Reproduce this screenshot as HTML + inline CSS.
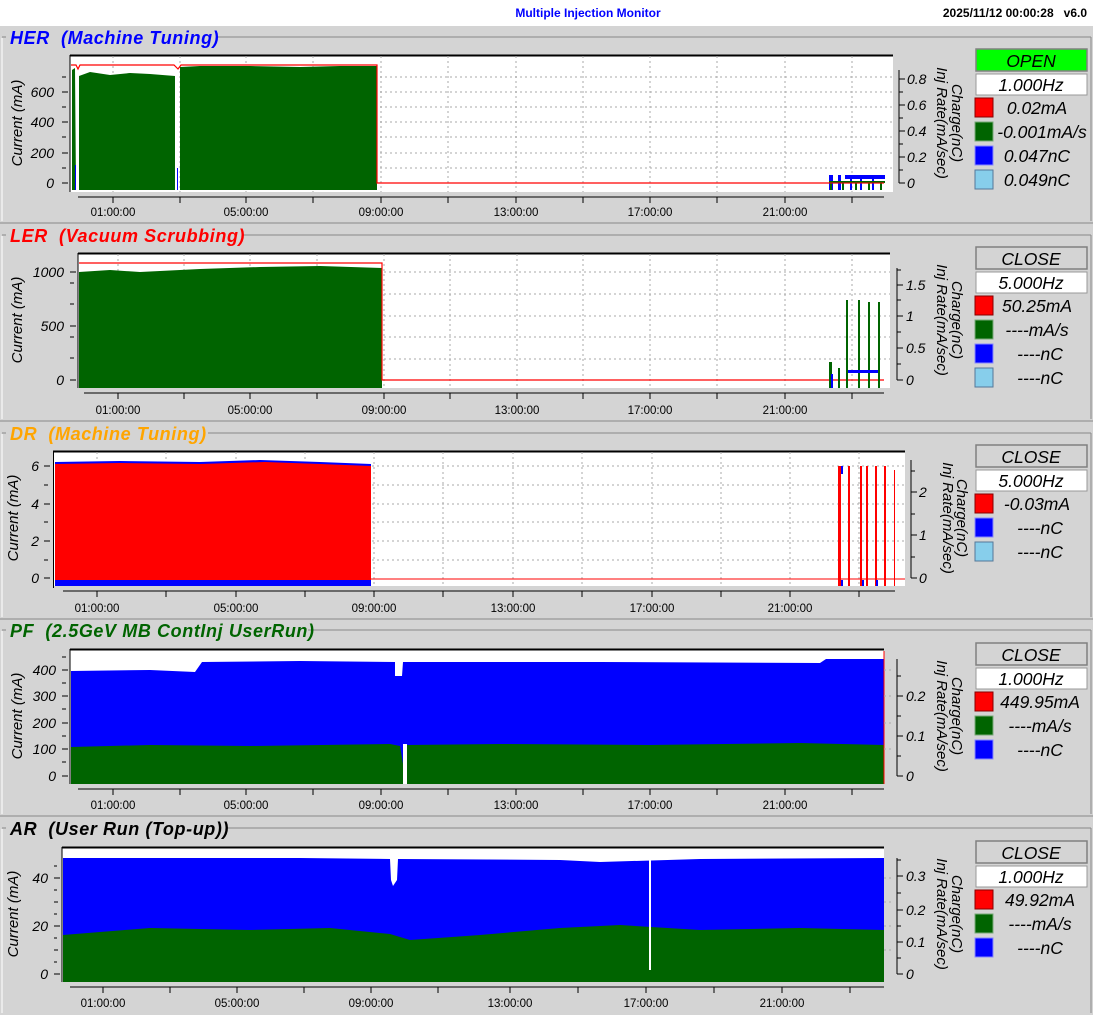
<!DOCTYPE html>
<html><head><meta charset="utf-8"><style>
body{margin:0;background:#d4d4d4;width:1093px;height:1015px;overflow:hidden}
svg{display:block}
.t{font-family:"Liberation Sans",sans-serif;font-style:italic;font-size:14px}
.r{font-size:15px}
.tt{font-family:"Liberation Sans",sans-serif;font-size:11.5px}
.ti{font-family:"Liberation Sans",sans-serif;font-style:italic;font-weight:bold;font-size:18px;letter-spacing:0.6px}
.lg{font-family:"Liberation Sans",sans-serif;font-style:italic;font-size:17.5px}
.g{stroke:#aaa;stroke-dasharray:2 3;stroke-width:1}
</style></head><body>
<svg width="1093" height="1015" xmlns="http://www.w3.org/2000/svg">
<rect x="0" y="0" width="1093" height="26" fill="#fff"/>
<text x="588" y="17" text-anchor="middle" fill="#0000ff" font-family="Liberation Sans Narrow,Liberation Sans,sans-serif" font-weight="bold" font-size="12" font-stretch="condensed">Multiple Injection Monitor</text>
<text x="1087" y="17" text-anchor="end" fill="#000" font-family="Liberation Sans Narrow,Liberation Sans,sans-serif" font-weight="bold" font-size="12" font-stretch="condensed">2025/11/12 00:00:28&#160;&#160;&#160;v6.0</text>

<g stroke="#888" fill="none">
<line x1="0" y1="223" x2="1093" y2="223"/><line x1="0" y1="421" x2="1093" y2="421"/><line x1="0" y1="619" x2="1093" y2="619"/><line x1="0" y1="816" x2="1093" y2="816"/>
<line x1="2" y1="37" x2="1091" y2="37"/><line x1="2" y1="235" x2="1091" y2="235"/><line x1="2" y1="433" x2="1091" y2="433"/><line x1="2" y1="630" x2="1091" y2="630"/><line x1="2" y1="828" x2="1091" y2="828"/>
<line x1="1091" y1="37" x2="1091" y2="221"/><line x1="1091" y1="235" x2="1091" y2="419"/><line x1="1091" y1="433" x2="1091" y2="617"/><line x1="1091" y1="630" x2="1091" y2="814"/><line x1="1091" y1="828" x2="1091" y2="1013"/>
</g>
<g stroke="#fff"><line x1="2" y1="38" x2="2" y2="221"/><line x1="2" y1="236" x2="2" y2="419"/><line x1="2" y1="434" x2="2" y2="617"/><line x1="2" y1="631" x2="2" y2="814"/><line x1="2" y1="829" x2="2" y2="1013"/></g>
<rect x="6" y="28" width="212" height="18" fill="#d4d4d4"/>
<rect x="6" y="226" width="236" height="18" fill="#d4d4d4"/>
<rect x="6" y="424" width="202" height="18" fill="#d4d4d4"/>
<rect x="6" y="621" width="302" height="18" fill="#d4d4d4"/>
<rect x="6" y="819" width="222" height="18" fill="#d4d4d4"/>
<text class="ti" x="10" y="44" fill="#0000ff">HER&#160; (Machine Tuning)</text>
<text class="ti" x="10" y="242" fill="#ff0000">LER&#160; (Vacuum Scrubbing)</text>
<text class="ti" x="10" y="440" fill="#ffa500">DR&#160; (Machine Tuning)</text>
<text class="ti" x="10" y="637" fill="#006400">PF&#160; (2.5GeV MB ContInj UserRun)</text>
<text class="ti" x="10" y="835" fill="#000">AR&#160; (User Run (Top-up))</text>

<!-- HER -->
<rect x="70" y="55" width="823" height="137" fill="#fff"/>
<line x1="70" y1="55.5" x2="893" y2="55.5" stroke="#000" stroke-width="2"/>
<line x1="70" y1="55" x2="70" y2="192" stroke="#000"/>
<g class="g"><line x1="113" y1="56" x2="113" y2="192"/><line x1="180" y1="56" x2="180" y2="192"/><line x1="246" y1="56" x2="246" y2="192"/><line x1="313" y1="56" x2="313" y2="192"/><line x1="381" y1="56" x2="381" y2="192"/><line x1="448" y1="56" x2="448" y2="192"/><line x1="516" y1="56" x2="516" y2="192"/><line x1="583" y1="56" x2="583" y2="192"/><line x1="650" y1="56" x2="650" y2="192"/><line x1="717" y1="56" x2="717" y2="192"/><line x1="785" y1="56" x2="785" y2="192"/><line x1="852" y1="56" x2="852" y2="192"/>
<line x1="380" y1="77" x2="893" y2="77"/><line x1="380" y1="92" x2="893" y2="92"/><line x1="380" y1="107" x2="893" y2="107"/><line x1="380" y1="122" x2="893" y2="122"/><line x1="380" y1="137" x2="893" y2="137"/><line x1="380" y1="153" x2="893" y2="153"/><line x1="380" y1="168" x2="893" y2="168"/></g>
<path d="M72 70 L75 68 L76 190 L72 190Z M79 76 L90 72 L110 75 L130 73 L150 74 L175 76 L175 190 L79 190Z M180 67 L200 66 L250 66 L300 67 L340 66 L377 66 L377 190 L180 190Z" fill="#006400"/>
<path d="M71 65 L76 65 L78 69 L80 65 L174 65 L178 69 L181 65 L377 65 L377 183 L884 183" fill="none" stroke="#f00" stroke-width="1.2"/>
<path d="M829 175h4v15h-4z M838 175h3v15h-3z M845 175h40v4h-40z M850 179h2v11h-2z M860 179h2v11h-2z M872 179h2v11h-2z" fill="#0000ff"/>
<path d="M829 181h56v2h-56z M830 183h2v7h-2z M842 183h2v7h-2z M855 183h2v7h-2z M868 183h2v7h-2z M880 183h2v7h-2z" fill="#006400"/>
<line x1="829" y1="183" x2="884" y2="183" stroke="#f00"/>
<rect x="75" y="165" width="1" height="25" fill="#0000ff"/><rect x="177" y="168" width="1" height="22" fill="#0000ff"/>
<g stroke="#000"><line x1="62" y1="183" x2="68" y2="183"/><line x1="62" y1="122" x2="68" y2="122"/><line x1="62" y1="107" x2="66" y2="107"/><line x1="62" y1="92" x2="68" y2="92"/><line x1="62" y1="77" x2="66" y2="77"/><line x1="62" y1="168" x2="66" y2="168"/><line x1="62" y1="137" x2="66" y2="137"/><line x1="62" y1="153" x2="68" y2="153"/>
<line x1="78" y1="197" x2="884" y2="197"/>
<line x1="113" y1="197" x2="113" y2="203"/><line x1="180" y1="197" x2="180" y2="203"/><line x1="246" y1="197" x2="246" y2="203"/><line x1="313" y1="197" x2="313" y2="203"/><line x1="381" y1="197" x2="381" y2="203"/><line x1="448" y1="197" x2="448" y2="203"/><line x1="516" y1="197" x2="516" y2="203"/><line x1="583" y1="197" x2="583" y2="203"/><line x1="650" y1="197" x2="650" y2="203"/><line x1="717" y1="197" x2="717" y2="203"/><line x1="785" y1="197" x2="785" y2="203"/><line x1="852" y1="197" x2="852" y2="203"/>
<line x1="899" y1="70" x2="899" y2="183"/><line x1="899" y1="183" x2="905" y2="183"/><line x1="899" y1="170" x2="903" y2="170"/><line x1="899" y1="157" x2="905" y2="157"/><line x1="899" y1="144" x2="903" y2="144"/><line x1="899" y1="131" x2="905" y2="131"/><line x1="899" y1="118" x2="903" y2="118"/><line x1="899" y1="105" x2="905" y2="105"/><line x1="899" y1="92" x2="903" y2="92"/><line x1="899" y1="79" x2="905" y2="79"/></g>
<g class="t" text-anchor="end"><text x="54" y="188">0</text><text x="54" y="158">200</text><text x="54" y="127">400</text><text x="54" y="97">600</text></g>
<g class="t"><text x="907" y="188">0</text><text x="907" y="162">0.2</text><text x="907" y="136">0.4</text><text x="907" y="110">0.6</text><text x="907" y="84">0.8</text></g>
<g class="tt" text-anchor="middle"><text x="113" y="216">01:00:00</text><text x="246" y="216">05:00:00</text><text x="381" y="216">09:00:00</text><text x="516" y="216">13:00:00</text><text x="650" y="216">17:00:00</text><text x="785" y="216">21:00:00</text></g>
<text class="t r" transform="translate(22,123) rotate(-90)" text-anchor="middle">Current (mA)</text>
<text class="t r" transform="translate(952,123) rotate(90)" text-anchor="middle">Charge(nC)</text>
<text class="t r" transform="translate(937,123) rotate(90)" text-anchor="middle">Inj Rate(mA/sec)</text>

<!-- LER -->
<rect x="78" y="253" width="812" height="135" fill="#fff"/>
<line x1="78" y1="253.5" x2="890" y2="253.5" stroke="#000" stroke-width="2"/>
<line x1="78" y1="253" x2="78" y2="388" stroke="#000"/>
<g class="g"><line x1="118" y1="254" x2="118" y2="388"/><line x1="184" y1="254" x2="184" y2="388"/><line x1="250" y1="254" x2="250" y2="388"/><line x1="317" y1="254" x2="317" y2="388"/><line x1="384" y1="254" x2="384" y2="388"/><line x1="450" y1="254" x2="450" y2="388"/><line x1="517" y1="254" x2="517" y2="388"/><line x1="583" y1="254" x2="583" y2="388"/><line x1="650" y1="254" x2="650" y2="388"/><line x1="717" y1="254" x2="717" y2="388"/><line x1="785" y1="254" x2="785" y2="388"/><line x1="852" y1="254" x2="852" y2="388"/>
<line x1="384" y1="272" x2="890" y2="272"/><line x1="384" y1="294" x2="890" y2="294"/><line x1="384" y1="316" x2="890" y2="316"/><line x1="384" y1="337" x2="890" y2="337"/><line x1="384" y1="359" x2="890" y2="359"/></g>
<path d="M79 272 L110 270 L140 272 L200 269 L260 267 L320 266 L382 268 L382 388 L79 388Z" fill="#006400"/>
<path d="M79 263 L382 263 L382 380 L884 380" fill="none" stroke="#f00" stroke-width="1.2"/>
<path d="M829 362h3v26h-3z M846 300h2v88h-2z M858 300h2v88h-2z M868 302h2v86h-2z M878 302h2v86h-2z M838 368h2v20h-2z" fill="#006400"/>
<path d="M831 374h2v14h-2z M848 370h30v3h-30z" fill="#0000ff"/>
<g stroke="#000"><line x1="70" y1="380" x2="76" y2="380"/><line x1="70" y1="326" x2="76" y2="326"/><line x1="70" y1="272" x2="76" y2="272"/><line x1="70" y1="358" x2="74" y2="358"/><line x1="70" y1="337" x2="74" y2="337"/><line x1="70" y1="304" x2="74" y2="304"/><line x1="70" y1="283" x2="74" y2="283"/>
<line x1="84" y1="393" x2="884" y2="393"/>
<line x1="118" y1="393" x2="118" y2="399"/><line x1="184" y1="393" x2="184" y2="399"/><line x1="250" y1="393" x2="250" y2="399"/><line x1="317" y1="393" x2="317" y2="399"/><line x1="384" y1="393" x2="384" y2="399"/><line x1="450" y1="393" x2="450" y2="399"/><line x1="517" y1="393" x2="517" y2="399"/><line x1="583" y1="393" x2="583" y2="399"/><line x1="650" y1="393" x2="650" y2="399"/><line x1="717" y1="393" x2="717" y2="399"/><line x1="785" y1="393" x2="785" y2="399"/><line x1="852" y1="393" x2="852" y2="399"/>
<line x1="897" y1="268" x2="897" y2="380"/><line x1="897" y1="380" x2="903" y2="380"/><line x1="897" y1="364" x2="901" y2="364"/><line x1="897" y1="348" x2="903" y2="348"/><line x1="897" y1="332" x2="901" y2="332"/><line x1="897" y1="316" x2="903" y2="316"/><line x1="897" y1="300" x2="901" y2="300"/><line x1="897" y1="285" x2="903" y2="285"/><line x1="897" y1="270" x2="901" y2="270"/></g>
<g class="t" text-anchor="end"><text x="64" y="385">0</text><text x="64" y="331">500</text><text x="64" y="277">1000</text></g>
<g class="t"><text x="906" y="385">0</text><text x="906" y="353">0.5</text><text x="906" y="321">1</text><text x="906" y="290">1.5</text></g>
<g class="tt" text-anchor="middle"><text x="118" y="414">01:00:00</text><text x="250" y="414">05:00:00</text><text x="384" y="414">09:00:00</text><text x="517" y="414">13:00:00</text><text x="650" y="414">17:00:00</text><text x="785" y="414">21:00:00</text></g>
<text class="t r" transform="translate(22,320) rotate(-90)" text-anchor="middle">Current (mA)</text>
<text class="t r" transform="translate(952,320) rotate(90)" text-anchor="middle">Charge(nC)</text>
<text class="t r" transform="translate(937,320) rotate(90)" text-anchor="middle">Inj Rate(mA/sec)</text>

<!-- DR -->
<rect x="53" y="451" width="852" height="135" fill="#fff"/>
<line x1="53" y1="451.5" x2="905" y2="451.5" stroke="#000" stroke-width="2"/>
<line x1="53.5" y1="451" x2="53.5" y2="588" stroke="#000"/>
<g class="g"><line x1="97" y1="452" x2="97" y2="586"/><line x1="166" y1="452" x2="166" y2="586"/><line x1="236" y1="452" x2="236" y2="586"/><line x1="305" y1="452" x2="305" y2="586"/><line x1="374" y1="452" x2="374" y2="586"/><line x1="443" y1="452" x2="443" y2="586"/><line x1="513" y1="452" x2="513" y2="586"/><line x1="582" y1="452" x2="582" y2="586"/><line x1="652" y1="452" x2="652" y2="586"/><line x1="721" y1="452" x2="721" y2="586"/><line x1="790" y1="452" x2="790" y2="586"/><line x1="859" y1="452" x2="859" y2="586"/>
<line x1="372" y1="466" x2="905" y2="466"/><line x1="372" y1="485" x2="905" y2="485"/><line x1="372" y1="504" x2="905" y2="504"/><line x1="372" y1="522" x2="905" y2="522"/><line x1="372" y1="541" x2="905" y2="541"/><line x1="372" y1="560" x2="905" y2="560"/></g>
<path d="M55 462 L120 461 L200 462 L260 460 L320 462 L371 464 L371 586 L55 586Z" fill="#0000ff"/>
<path d="M55 464 L120 463 L200 464 L265 462 L320 464 L371 466 L371 580 L55 580Z" fill="#f00"/>
<line x1="371" y1="579" x2="905" y2="579" stroke="#f00"/>
<path d="M838 466h3v120h-3z M848 466h2v120h-2z M860 466h2v120h-2z M866 466h2v120h-2z M875 466h2v120h-2z M884 466h2v120h-2z M894 470h1v116h-1z" fill="#f00"/>
<path d="M841 466h2v8h-2z M841 580h2v6h-2z M862 580h2v6h-2z M876 580h2v6h-2z" fill="#0000ff"/>
<g stroke="#000"><line x1="44" y1="578" x2="50" y2="578"/><line x1="44" y1="541" x2="50" y2="541"/><line x1="44" y1="504" x2="50" y2="504"/><line x1="44" y1="466" x2="50" y2="466"/><line x1="44" y1="560" x2="48" y2="560"/><line x1="44" y1="522" x2="48" y2="522"/><line x1="44" y1="485" x2="48" y2="485"/>
<line x1="63" y1="591" x2="895" y2="591"/>
<line x1="97" y1="591" x2="97" y2="597"/><line x1="166" y1="591" x2="166" y2="597"/><line x1="236" y1="591" x2="236" y2="597"/><line x1="305" y1="591" x2="305" y2="597"/><line x1="374" y1="591" x2="374" y2="597"/><line x1="443" y1="591" x2="443" y2="597"/><line x1="513" y1="591" x2="513" y2="597"/><line x1="582" y1="591" x2="582" y2="597"/><line x1="652" y1="591" x2="652" y2="597"/><line x1="721" y1="591" x2="721" y2="597"/><line x1="790" y1="591" x2="790" y2="597"/><line x1="859" y1="591" x2="859" y2="597"/>
<line x1="911" y1="460" x2="911" y2="578"/><line x1="911" y1="578" x2="917" y2="578"/><line x1="911" y1="557" x2="915" y2="557"/><line x1="911" y1="535" x2="917" y2="535"/><line x1="911" y1="514" x2="915" y2="514"/><line x1="911" y1="492" x2="917" y2="492"/><line x1="911" y1="471" x2="915" y2="471"/></g>
<g class="t" text-anchor="end"><text x="39" y="583">0</text><text x="39" y="546">2</text><text x="39" y="509">4</text><text x="39" y="471">6</text></g>
<g class="t"><text x="919" y="583">0</text><text x="919" y="540">1</text><text x="919" y="497">2</text></g>
<g class="tt" text-anchor="middle"><text x="97" y="612">01:00:00</text><text x="236" y="612">05:00:00</text><text x="374" y="612">09:00:00</text><text x="513" y="612">13:00:00</text><text x="652" y="612">17:00:00</text><text x="790" y="612">21:00:00</text></g>
<text class="t r" transform="translate(18,518) rotate(-90)" text-anchor="middle">Current (mA)</text>
<text class="t r" transform="translate(957,518) rotate(90)" text-anchor="middle">Charge(nC)</text>
<text class="t r" transform="translate(943,518) rotate(90)" text-anchor="middle">Inj Rate(mA/sec)</text>

<!-- PF -->
<rect x="70" y="649" width="814" height="135" fill="#fff"/>
<line x1="70" y1="649.5" x2="884" y2="649.5" stroke="#000" stroke-width="2"/>
<line x1="70" y1="649" x2="70" y2="784" stroke="#000"/>
<path d="M71 671 L150 670 L195 672 L202 662 L300 661 L395 662 L395 676 L402 676 L403 662 L600 662 L820 663 L826 659 L884 659 L884 784 L71 784Z" fill="#0000ff"/>
<path d="M71 747 L150 745 L250 746 L390 744 L400 746 L404 770 L404 784 L71 784Z M407 745 L500 744 L650 745 L800 743 L884 745 L884 784 L407 784Z" fill="#006400"/>
<rect x="403" y="744" width="4" height="40" fill="#fff"/>
<line x1="884" y1="651" x2="884" y2="784" stroke="#f00"/>
<g class="g"><line x1="884" y1="670" x2="893" y2="670"/><line x1="884" y1="696" x2="893" y2="696"/><line x1="884" y1="723" x2="893" y2="723"/><line x1="884" y1="749" x2="893" y2="749"/></g>
<g stroke="#000"><line x1="62" y1="776" x2="68" y2="776"/><line x1="62" y1="749" x2="68" y2="749"/><line x1="62" y1="723" x2="68" y2="723"/><line x1="62" y1="696" x2="68" y2="696"/><line x1="62" y1="670" x2="68" y2="670"/><line x1="62" y1="762" x2="66" y2="762"/><line x1="62" y1="736" x2="66" y2="736"/><line x1="62" y1="709" x2="66" y2="709"/><line x1="62" y1="683" x2="66" y2="683"/><line x1="62" y1="657" x2="66" y2="657"/>
<line x1="78" y1="789" x2="884" y2="789"/>
<line x1="113" y1="789" x2="113" y2="795"/><line x1="180" y1="789" x2="180" y2="795"/><line x1="246" y1="789" x2="246" y2="795"/><line x1="313" y1="789" x2="313" y2="795"/><line x1="381" y1="789" x2="381" y2="795"/><line x1="448" y1="789" x2="448" y2="795"/><line x1="516" y1="789" x2="516" y2="795"/><line x1="583" y1="789" x2="583" y2="795"/><line x1="650" y1="789" x2="650" y2="795"/><line x1="717" y1="789" x2="717" y2="795"/><line x1="785" y1="789" x2="785" y2="795"/><line x1="852" y1="789" x2="852" y2="795"/>
<line x1="897" y1="659" x2="897" y2="776"/><line x1="897" y1="776" x2="903" y2="776"/><line x1="897" y1="756" x2="901" y2="756"/><line x1="897" y1="736" x2="903" y2="736"/><line x1="897" y1="716" x2="901" y2="716"/><line x1="897" y1="696" x2="903" y2="696"/><line x1="897" y1="676" x2="901" y2="676"/></g>
<g class="t" text-anchor="end"><text x="56" y="781">0</text><text x="56" y="754">100</text><text x="56" y="728">200</text><text x="56" y="701">300</text><text x="56" y="675">400</text></g>
<g class="t"><text x="906" y="781">0</text><text x="906" y="741">0.1</text><text x="906" y="701">0.2</text></g>
<g class="tt" text-anchor="middle"><text x="113" y="809">01:00:00</text><text x="246" y="809">05:00:00</text><text x="381" y="809">09:00:00</text><text x="516" y="809">13:00:00</text><text x="650" y="809">17:00:00</text><text x="785" y="809">21:00:00</text></g>
<text class="t r" transform="translate(22,716) rotate(-90)" text-anchor="middle">Current (mA)</text>
<text class="t r" transform="translate(952,716) rotate(90)" text-anchor="middle">Charge(nC)</text>
<text class="t r" transform="translate(937,716) rotate(90)" text-anchor="middle">Inj Rate(mA/sec)</text>

<!-- AR -->
<rect x="62" y="847" width="822" height="135" fill="#fff"/>
<line x1="62" y1="847.5" x2="884" y2="847.5" stroke="#000" stroke-width="2"/>
<line x1="62" y1="847" x2="62" y2="982" stroke="#000"/>
<path d="M63 858 L300 858 L390 859 L391 880 L393 886 L397 880 L398 859 L560 860 L600 862 L700 859 L884 858 L884 982 L63 982Z" fill="#0000ff"/>
<path d="M63 935 L150 928 L250 930 L330 928 L390 934 L410 940 L480 935 L560 928 L620 925 L700 930 L800 928 L884 930 L884 982 L63 982Z" fill="#006400"/>
<rect x="649" y="860" width="2" height="110" fill="#fff"/>
<g class="g"><line x1="884" y1="878" x2="893" y2="878"/><line x1="884" y1="902" x2="893" y2="902"/><line x1="884" y1="926" x2="893" y2="926"/><line x1="884" y1="950" x2="893" y2="950"/></g>
<g stroke="#000"><line x1="54" y1="974" x2="60" y2="974"/><line x1="54" y1="926" x2="60" y2="926"/><line x1="54" y1="878" x2="60" y2="878"/><line x1="54" y1="950" x2="58" y2="950"/><line x1="54" y1="902" x2="58" y2="902"/><line x1="54" y1="962" x2="57" y2="962"/><line x1="54" y1="938" x2="57" y2="938"/><line x1="54" y1="914" x2="57" y2="914"/><line x1="54" y1="890" x2="57" y2="890"/><line x1="54" y1="866" x2="57" y2="866"/>
<line x1="70" y1="987" x2="884" y2="987"/>
<line x1="103" y1="987" x2="103" y2="993"/><line x1="170" y1="987" x2="170" y2="993"/><line x1="237" y1="987" x2="237" y2="993"/><line x1="304" y1="987" x2="304" y2="993"/><line x1="371" y1="987" x2="371" y2="993"/><line x1="438" y1="987" x2="438" y2="993"/><line x1="510" y1="987" x2="510" y2="993"/><line x1="578" y1="987" x2="578" y2="993"/><line x1="646" y1="987" x2="646" y2="993"/><line x1="714" y1="987" x2="714" y2="993"/><line x1="782" y1="987" x2="782" y2="993"/><line x1="850" y1="987" x2="850" y2="993"/>
<line x1="897" y1="858" x2="897" y2="974"/><line x1="897" y1="974" x2="903" y2="974"/><line x1="897" y1="958" x2="901" y2="958"/><line x1="897" y1="942" x2="903" y2="942"/><line x1="897" y1="926" x2="901" y2="926"/><line x1="897" y1="910" x2="903" y2="910"/><line x1="897" y1="893" x2="901" y2="893"/><line x1="897" y1="876" x2="903" y2="876"/><line x1="897" y1="860" x2="901" y2="860"/></g>
<g class="t" text-anchor="end"><text x="48" y="979">0</text><text x="48" y="931">20</text><text x="48" y="883">40</text></g>
<g class="t"><text x="906" y="979">0</text><text x="906" y="947">0.1</text><text x="906" y="915">0.2</text><text x="906" y="881">0.3</text></g>
<g class="tt" text-anchor="middle"><text x="103" y="1007">01:00:00</text><text x="237" y="1007">05:00:00</text><text x="371" y="1007">09:00:00</text><text x="510" y="1007">13:00:00</text><text x="646" y="1007">17:00:00</text><text x="782" y="1007">21:00:00</text></g>
<text class="t r" transform="translate(18,914) rotate(-90)" text-anchor="middle">Current (mA)</text>
<text class="t r" transform="translate(952,914) rotate(90)" text-anchor="middle">Charge(nC)</text>
<text class="t r" transform="translate(937,914) rotate(90)" text-anchor="middle">Inj Rate(mA/sec)</text>

<!-- Legends -->
<g>
<rect x="976" y="49" width="111" height="22" fill="#00ff00" stroke="#808080" stroke-width="1.5"/>
<text class="lg" x="1031" y="67" text-anchor="middle">OPEN</text>
<rect x="976" y="74" width="111" height="21" fill="#fff" stroke="#999"/>
<text class="lg" x="1031" y="91" text-anchor="middle">1.000Hz</text>
<rect x="975" y="98" width="18" height="19" fill="#f00" stroke="#800"/><text class="lg" x="1037" y="114" text-anchor="middle">0.02mA</text>
<rect x="975" y="122" width="18" height="19" fill="#006400" stroke="#7a7"/><text class="lg" x="1042" y="138" text-anchor="middle">-0.001mA/s</text>
<rect x="975" y="146" width="18" height="19" fill="#0000ff" stroke="#88f"/><text class="lg" x="1037" y="162" text-anchor="middle">0.047nC</text>
<rect x="975" y="170" width="18" height="19" fill="#87ceeb" stroke="#579"/><text class="lg" x="1037" y="186" text-anchor="middle">0.049nC</text>

<rect x="976" y="247" width="111" height="22" fill="#d4d4d4" stroke="#808080" stroke-width="1.5"/>
<text class="lg" x="1031" y="265" text-anchor="middle">CLOSE</text>
<rect x="976" y="272" width="111" height="21" fill="#fff" stroke="#999"/>
<text class="lg" x="1031" y="289" text-anchor="middle">5.000Hz</text>
<rect x="975" y="296" width="18" height="19" fill="#f00" stroke="#800"/><text class="lg" x="1037" y="312" text-anchor="middle">50.25mA</text>
<rect x="975" y="320" width="18" height="19" fill="#006400" stroke="#7a7"/><text class="lg" x="1037" y="336" text-anchor="middle">----mA/s</text>
<rect x="975" y="344" width="18" height="19" fill="#0000ff" stroke="#88f"/><text class="lg" x="1040" y="360" text-anchor="middle">----nC</text>
<rect x="975" y="368" width="18" height="19" fill="#87ceeb" stroke="#579"/><text class="lg" x="1040" y="384" text-anchor="middle">----nC</text>

<rect x="976" y="445" width="111" height="22" fill="#d4d4d4" stroke="#808080" stroke-width="1.5"/>
<text class="lg" x="1031" y="463" text-anchor="middle">CLOSE</text>
<rect x="976" y="470" width="111" height="21" fill="#fff" stroke="#999"/>
<text class="lg" x="1031" y="487" text-anchor="middle">5.000Hz</text>
<rect x="975" y="494" width="18" height="19" fill="#f00" stroke="#800"/><text class="lg" x="1037" y="510" text-anchor="middle">-0.03mA</text>
<rect x="975" y="518" width="18" height="19" fill="#0000ff" stroke="#88f"/><text class="lg" x="1040" y="534" text-anchor="middle">----nC</text>
<rect x="975" y="542" width="18" height="19" fill="#87ceeb" stroke="#579"/><text class="lg" x="1040" y="558" text-anchor="middle">----nC</text>

<rect x="976" y="643" width="111" height="22" fill="#d4d4d4" stroke="#808080" stroke-width="1.5"/>
<text class="lg" x="1031" y="661" text-anchor="middle">CLOSE</text>
<rect x="976" y="668" width="111" height="21" fill="#fff" stroke="#999"/>
<text class="lg" x="1031" y="685" text-anchor="middle">1.000Hz</text>
<rect x="975" y="692" width="18" height="19" fill="#f00" stroke="#800"/><text class="lg" x="1040" y="708" text-anchor="middle">449.95mA</text>
<rect x="975" y="716" width="18" height="19" fill="#006400" stroke="#7a7"/><text class="lg" x="1040" y="732" text-anchor="middle">----mA/s</text>
<rect x="975" y="740" width="18" height="19" fill="#0000ff" stroke="#88f"/><text class="lg" x="1040" y="756" text-anchor="middle">----nC</text>

<rect x="976" y="841" width="111" height="22" fill="#d4d4d4" stroke="#808080" stroke-width="1.5"/>
<text class="lg" x="1031" y="859" text-anchor="middle">CLOSE</text>
<rect x="976" y="866" width="111" height="21" fill="#fff" stroke="#999"/>
<text class="lg" x="1031" y="883" text-anchor="middle">1.000Hz</text>
<rect x="975" y="890" width="18" height="19" fill="#f00" stroke="#800"/><text class="lg" x="1040" y="906" text-anchor="middle">49.92mA</text>
<rect x="975" y="914" width="18" height="19" fill="#006400" stroke="#7a7"/><text class="lg" x="1040" y="930" text-anchor="middle">----mA/s</text>
<rect x="975" y="938" width="18" height="19" fill="#0000ff" stroke="#88f"/><text class="lg" x="1040" y="954" text-anchor="middle">----nC</text>
</g>
</svg>
</body></html>
